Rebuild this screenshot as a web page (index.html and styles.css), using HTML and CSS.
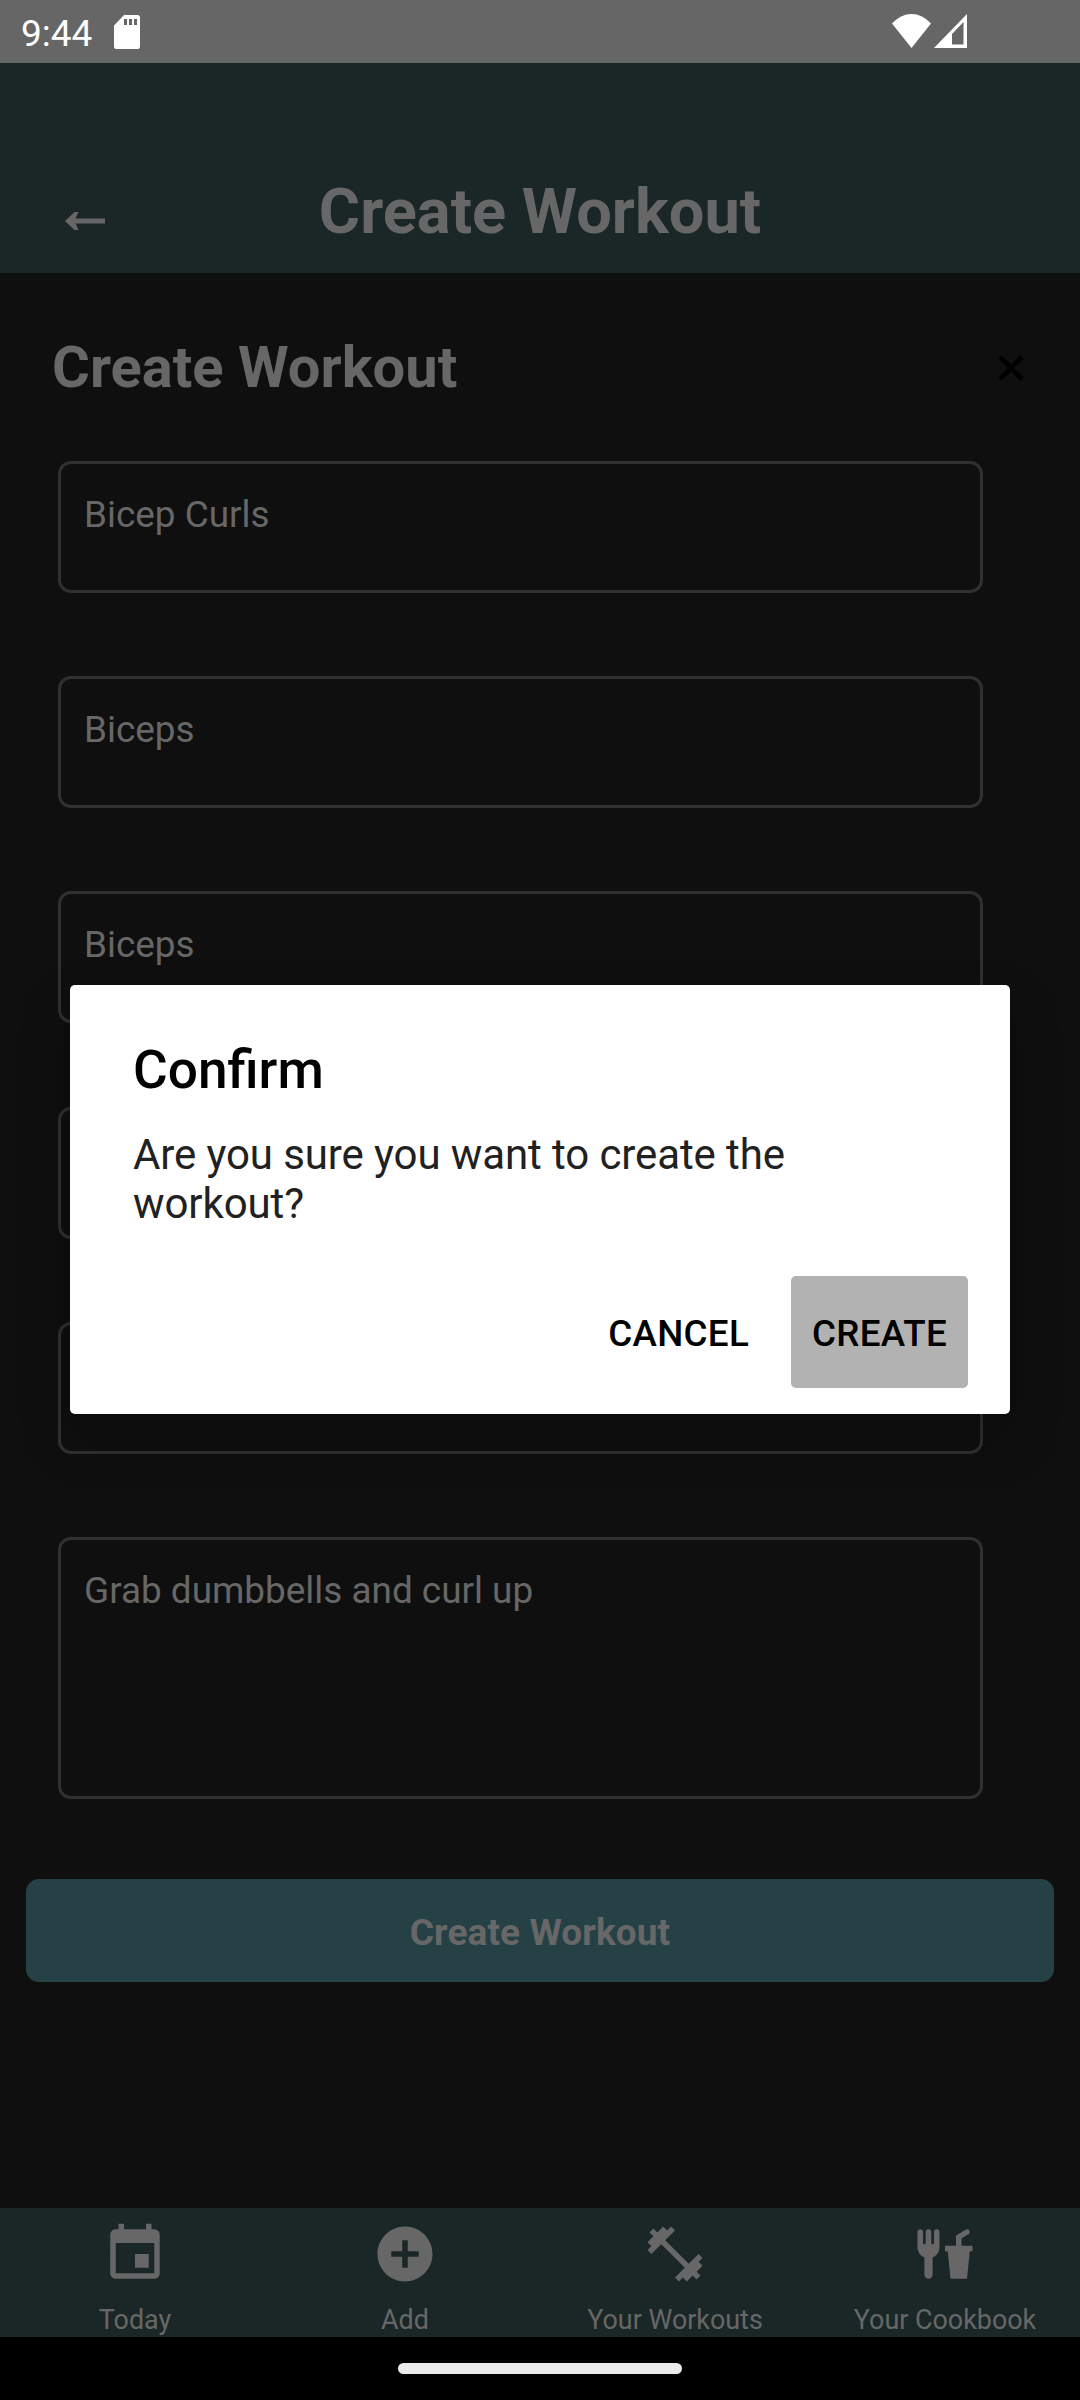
FILE: index.html
```html
<!DOCTYPE html>
<html lang="en">
<head>
<meta charset="utf-8">
<title>Create Workout</title>
<link rel="stylesheet" href="styles.css">
</head>
<body>
<div class="screen">
  <div class="status-bar">
    <span class="clock">9:44</span>
    <svg class="sd" width="26" height="34" viewBox="0 0 26 34"><path fill="#fff" fill-rule="evenodd" d="M10 0H23.500Q26 0 26 2.500V31.500Q26 34 23.500 34H2.500Q0 34 0 31.500V10.500ZM10 4V10H13V4ZM15 4V10H18V4ZM20 4V10H23V4Z"/></svg>
    <svg class="wifi" width="39" height="34" viewBox="0 0 39 34"><path fill="#fff" d="M0 9.500Q8.500 0 19.500 0T39 9.500L19.500 34Z"/></svg>
    <svg class="signal" width="33" height="34" viewBox="0 0 33 34"><path fill="#fff" fill-rule="evenodd" d="M0 34L33 0V34ZM18 20V30.500H29.500V8Z"/></svg>
  </div>
  <header class="app-header">
    <svg class="back" width="40" height="18" viewBox="0 0 40 18"><path fill="#676767" d="M0 9L9.500 0H13.500L10.500 6.500H40V11.500H10.500L13.500 18H9.500Z"/></svg>
    <h1 class="app-title">Create Workout</h1>
  </header>
  <main class="content">
    <div class="form-head">
      <h2 class="form-title">Create Workout</h2>
      <svg class="close" width="26" height="26" viewBox="0 0 26 26"><path d="M2 2L24 24M24 2L2 24" stroke="#000" stroke-width="4.600"/></svg>
    </div>
    <div class="fields">
      <div class="field">Bicep Curls</div>
      <div class="field">Biceps</div>
      <div class="field">Biceps</div>
      <div class="field"></div>
      <div class="field"></div>
      <div class="field tall">Grab dumbbells and curl up</div>
    </div>
    <div class="submit">Create Workout</div>
  </main>
  <nav class="tabs">
    <div class="tab">
      <svg class="tab-icon" viewBox="0 0 24 24"><path d="M17 12h-5v5h5v-5zM16 1v2H8V1H6v2H5c-1.110 0-1.990.9-1.990 2L3 19c0 1.100.89 2 2 2h14c1.100 0 2-.9 2-2V5c0-1.100-.9-2-2-2h-1V1h-2zm3 18H5V8h14v11z"/></svg>
      <span>Today</span>
    </div>
    <div class="tab">
      <svg class="tab-icon" viewBox="0 0 24 24"><path d="M12 2C6.480 2 2 6.480 2 12s4.480 10 10 10 10-4.480 10-10S17.520 2 12 2zm5 11h-4v4h-2v-4H7v-2h4V7h2v4h4v2z"/></svg>
      <span>Add</span>
    </div>
    <div class="tab">
      <svg class="tab-icon" viewBox="0 0 24 24"><path d="M20.570 14.860L22 13.430 20.570 12 17 15.570 8.430 7 12 3.430 10.570 2 9.140 3.430 7.710 2 5.570 4.140 4.140 2.710 2.710 4.140l1.430 1.430L2 7.710l1.430 1.430L2 10.570 3.430 12 7 8.430 15.570 17 12 20.570 13.430 22l1.430-1.430L16.290 22l2.140-2.140 1.430 1.430 1.430-1.430-1.430-1.430L22 16.290z"/></svg>
      <span>Your Workouts</span>
    </div>
    <div class="tab">
      <svg class="tab-icon" viewBox="0 0 24 24"><path d="M3,3A1,1 0 0,0 2,4V9.500C2,11.190 3.030,12.630 4.500,13.220V19.500A1.500,1.500 0 0,0 6,21A1.500,1.500 0 0,0 7.500,19.500V13.220C8.970,12.630 10,11.190 10,9.500V4A1,1 0 0,0 9,3A1,1 0 0,0 8,4V8A0.500,0.500 0 0,1 7.500,8.500A0.500,0.500 0 0,1 7,8V4A1,1 0 0,0 6,3A1,1 0 0,0 5,4V8A0.500,0.500 0 0,1 4.500,8.500A0.500,0.500 0 0,1 4,8V4A1,1 0 0,0 3,3M19.880,3C19.750,3 19.620,3.090 19.500,3.160L16,5.250V9H12V11H13L14,21H20L21,11H22V9H18V6.340L20.500,4.840C21,4.560 21.130,4 20.840,3.500C20.630,3.140 20.260,2.950 19.880,3Z"/></svg>
      <span>Your Cookbook</span>
    </div>
  </nav>
  <div class="gesture-bar"><div class="pill"></div></div>

  <div class="dialog">
    <h3 class="dialog-title">Confirm</h3>
    <p class="dialog-text">Are you sure you want to create the workout?</p>
    <div class="actions">
      <div class="action">CANCEL</div>
      <div class="action pressed">CREATE</div>
    </div>
  </div>
</div>
</body>
</html>
```
FILE: styles.css
```css
* { box-sizing: border-box; }
body { margin: 0; background: #0f0f0f; font-family: Roboto, sans-serif; }
h1, h2, h3, p { margin: 0; }
svg { display: block; flex: none; }

.screen {
  position: relative;
  width: 1080px;
  height: 2400px;
  display: flex;
  flex-direction: column;
  overflow: hidden;
  color: #676767;
}

.status-bar {
  height: 63px;
  flex: none;
  display: flex;
  padding: 0 113px 0 21px;
  background: #666;
  color: #fff;
}
.clock { width: 93px; font-size: 37px; line-height: 67px; }
.sd { margin-top: 15px; }
.wifi { margin: 14px 3px 0 auto; }
.signal { margin-top: 14px; }

.app-header {
  height: 210px;
  flex: none;
  display: grid;
  grid-template-columns: 65px 1fr 65px;
  background: #1a2726;
}
.back { grid-column: 2; grid-row: 1; margin-top: 149px; }
.app-title {
  grid-column: 1 / -1;
  grid-row: 1;
  padding-top: 111px;
  text-align: center;
  font-size: 63.200px;
  line-height: 74px;
  font-weight: 700;
}

.content { flex: 1; padding: 60px 26px 0; }
.form-head {
  height: 68px;
  display: flex;
  justify-content: space-between;
  padding: 0 30px 0 26px;
}
.form-title { font-size: 57.900px; line-height: 68px; font-weight: 700; }
.close { margin-top: 22px; }

.fields {
  display: flex;
  flex-direction: column;
  gap: 83.200px;
  padding: 60px 71px 0 32px;
}
.field {
  height: 132px;
  padding: 29px 23px;
  border: 3px solid #303030;
  border-radius: 13px;
  font-size: 36.900px;
  line-height: 43px;
}
.field.tall { height: 262px; }

.submit {
  height: 103px;
  margin-top: 80px;
  border-radius: 13px;
  background: #254145;
  text-align: center;
  font-size: 37px;
  line-height: 108px;
  letter-spacing: 0.100px;
  font-weight: 700;
}

.tabs {
  height: 129px;
  flex: none;
  display: grid;
  grid-template-columns: repeat(4, 1fr);
  background: #1a2726;
}
.tab {
  display: flex;
  flex-direction: column;
  align-items: center;
  padding-top: 13px;
  font-size: 26.900px;
  line-height: 32px;
}
.tab-icon { width: 66px; height: 66px; margin-bottom: 17px; fill: #676767; }

.gesture-bar { height: 63px; flex: none; padding-top: 26px; background: #000; }
.pill { width: 284px; height: 11px; margin: 0 auto; border-radius: 5.500px; background: #ebebeb; }

.dialog {
  position: absolute;
  left: 70px;
  top: 985px;
  width: 940px;
  height: 429px;
  padding: 54px 42px 0 63px;
  border-radius: 5px;
  background: #fff;
  box-shadow: 0 24px 50px rgba(0, 0, 0, 0.250);
  color: #000;
}
.dialog-title { font-size: 53.200px; line-height: 62px; font-weight: 500; }
.dialog-text {
  width: 750px;
  margin-top: 29px;
  font-size: 42px;
  line-height: 49px;
  letter-spacing: -0.100px;
  color: #212121;
}
.actions { display: flex; justify-content: flex-end; margin-top: 48px; }
.action {
  height: 112px;
  padding: 0 21px;
  border-radius: 5px;
  font-size: 36.75px;
  line-height: 115px;
  letter-spacing: 0.300px;
  font-weight: 500;
}
.action + .action { margin-left: 21px; }
.pressed { background: #b2b2b2; }
```
